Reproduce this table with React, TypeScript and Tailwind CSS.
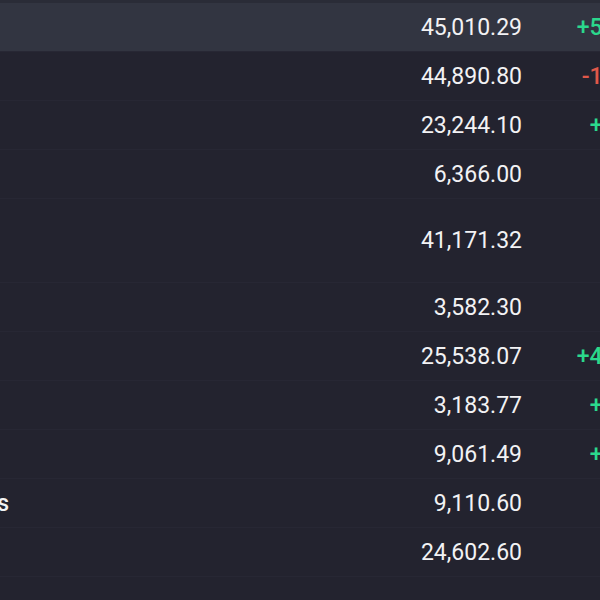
import { clsx as cn } from "clsx";

type Row = {
  name: string;
  last: string;
  change: string;
  dir: "up" | "down" | "flat";
  tall?: boolean;
  active?: boolean;
};

const rows: Row[] = [
  { name: "Dow Jones", last: "45,010.29", change: "+5.21%", dir: "up", active: true },
  { name: "S&P 500", last: "44,890.80", change: "-1.23%", dir: "down" },
  { name: "Nasdaq", last: "23,244.10", change: "+0.8%", dir: "up" },
  { name: "Russell", last: "6,366.00", change: "0.00", dir: "flat" },
  { name: "DAX", last: "41,171.32", change: "0.00", dir: "flat", tall: true },
  { name: "FTSE", last: "3,582.30", change: "0.00", dir: "flat" },
  { name: "Nikkei 225", last: "25,538.07", change: "+4.06%", dir: "up" },
  { name: "CAC 40", last: "3,183.77", change: "+0.5%", dir: "up" },
  { name: "Hang Seng", last: "9,061.49", change: "+1.4%", dir: "up" },
  { name: "US 10Y Treasury Notes", last: "9,110.60", change: "0.00", dir: "flat" },
  { name: "Euro Stoxx", last: "24,602.60", change: "0.00", dir: "flat" },
];

export default function App() {
  return (
    <div
      className="w-[600px] h-[600px] overflow-hidden bg-[#23232f] text-[#f2f2f4]"
      style={{ fontFamily: "Roboto, 'Liberation Sans', sans-serif" }}
    >
      <div className="h-[3px] bg-[#2a2c37]" />
      {rows.map((row) => (
        <div
          key={row.name}
          className={cn(
            "flex items-center border-b border-[#272734] text-[23px] leading-none",
            row.tall ? "h-[84px]" : "h-[49px]",
            row.active && "bg-[#323541] border-[#2c2f3a]"
          )}
        >
          <div className="w-[444px] shrink-0 -ml-[244px] pl-4 whitespace-nowrap font-medium">
            {row.name}
          </div>
          <div className="w-[322px] shrink-0 text-right">{row.last}</div>
          <div
            className={cn(
              "w-[130px] shrink-0 text-right font-medium",
              row.dir === "up" && "text-[#2bd88c]",
              row.dir === "down" && "text-[#e0584a]",
              row.dir === "flat" && "text-[#9a9ca8]"
            )}
          >
            {row.change}
          </div>
        </div>
      ))}
    </div>
  );
}
